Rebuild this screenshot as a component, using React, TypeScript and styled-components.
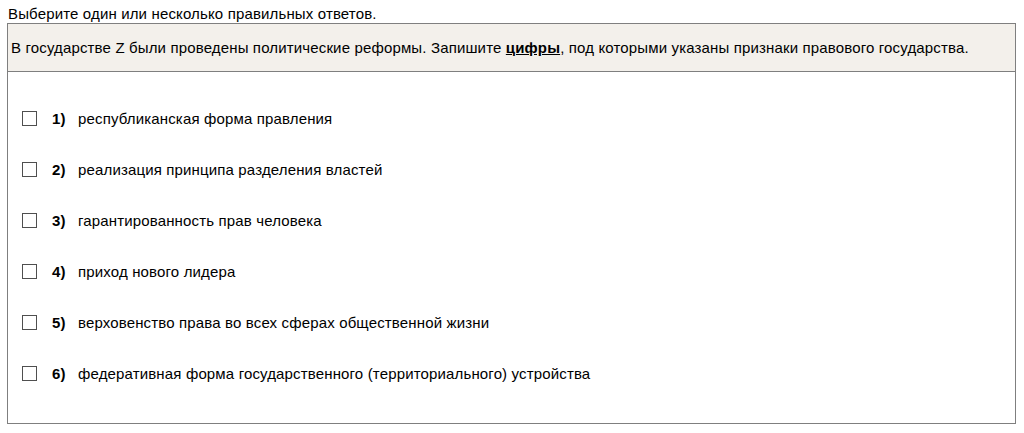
import React from "react";
import styled, { createGlobalStyle } from "styled-components";

const Global = createGlobalStyle`
  html, body { margin: 0; padding: 0; background: #fff; }
  body {
    font-family: "Liberation Sans", Arial, Helvetica, sans-serif;
    font-size: 15px;
    letter-spacing: 0.15px;
    color: #000;
  }
`;

const Page = styled.div`
  padding: 4px 8px 0 7px;
`;

const Hint = styled.div`
  padding-left: 1px;
  line-height: 19px;
`;

const Card = styled.div`
  border: 1px solid #7f7f7f;
  height: 401px;
  display: flex;
  flex-direction: column;
  box-sizing: border-box;
  width: 1009px;
`;

const Question = styled.div`
  background: #f3f0eb;
  border-bottom: 1px solid #7f7f7f;
  height: 48px;
  box-sizing: border-box;
  display: flex;
  align-items: center;
  padding: 0 0 1px 3px;
`;

const Options = styled.div`
  display: flex;
  flex-direction: column;
  padding: 37px 0 0 14px;
  gap: 33px;
`;

const Option = styled.label`
  display: flex;
  align-items: center;
  height: 18px;
`;

const Box = styled.span`
  width: 13px;
  height: 13px;
  border: 1px solid #4f4f4f;
  background: #fff;
  flex: none;
`;

const Num = styled.b`
  margin-left: 15px;
  width: 26px;
`;

const options = [
  "республиканская форма правления",
  "реализация принципа разделения властей",
  "гарантированность прав человека",
  "приход нового лидера",
  "верховенство права во всех сферах общественной жизни",
  "федеративная форма государственного (территориального) устройства",
];

export default function App() {
  return (
    <Page>
      <Global />
      <Hint>Выберите один или несколько правильных ответов.</Hint>
      <Card>
        <Question>
          <span>
            В государстве Z были проведены политические реформы. Запишите{" "}
            <b>
              <u>цифры</u>
            </b>
            , под которыми указаны признаки правового государства.
          </span>
        </Question>
        <Options>
          {options.map((o, i) => (
            <Option key={i}>
              <Box />
              <Num>{i + 1})</Num>
              <span>{o}</span>
            </Option>
          ))}
        </Options>
      </Card>
    </Page>
  );
}
